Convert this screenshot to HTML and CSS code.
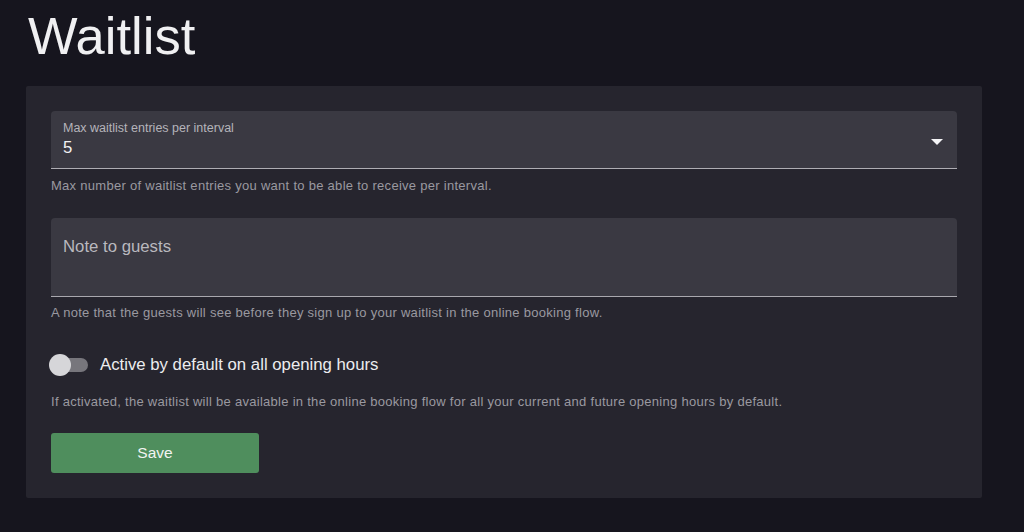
FILE: index.html
```html
<!DOCTYPE html>
<html lang="en">
<head>
<meta charset="utf-8">
<title>Waitlist</title>
<link rel="stylesheet" href="styles.css">
</head>
<body>
<div class="page">
  <h1 class="title">Waitlist</h1>
  <section class="card">
    <div class="field select">
      <div class="field-body">
        <div class="field-label">Max waitlist entries per interval</div>
        <div class="field-value">5</div>
      </div>
      <svg class="arrow" width="12" height="6" viewBox="0 0 12 6" aria-hidden="true"><polygon points="0,0 12,0 6,6" fill="#f4f4f6"/></svg>
    </div>
    <p class="helper helper-first">Max number of waitlist entries you want to be able to receive per interval.</p>

    <div class="field note">
      <div class="note-label">Note to guests</div>
    </div>
    <p class="helper helper-note">A note that the guests will see before they sign up to your waitlist in the online booking flow.</p>

    <div class="toggle-row">
      <span class="switch"><span class="track"></span><span class="thumb"></span></span>
      <span class="toggle-label">Active by default on all opening hours</span>
    </div>
    <p class="helper helper-toggle">If activated, the waitlist will be available in the online booking flow for all your current and future opening hours by default.</p>

    <button class="save" type="button">Save</button>
  </section>
</div>
</body>
</html>
```

FILE: styles.css
```css
html, body {
  margin: 0;
  padding: 0;
  background: #16151e;
  font-family: "Liberation Sans", Arial, sans-serif;
}

.page {
  padding: 6px 42px 0 26px;
  height: 532px;
  box-sizing: border-box;
}

.title {
  margin: 0 0 20px 0;
  padding-left: 2px;
  font-size: 52.5px;
  line-height: 60px;
  font-weight: 400;
  color: #f0f0f2;
}

.card {
  background: #26252e;
  border-radius: 2px;
  padding: 25px 25px 25px 25px;
}

.field {
  background: #3a3942;
  border-radius: 4px 4px 0 0;
  border-bottom: 1px solid #aeadb3;
}

.select {
  display: flex;
  padding: 9px 14px 9px 12px;
}

.field-body {
  flex: 1;
}

.field-label {
  font-size: 12.5px;
  line-height: 16px;
  color: #b5b4ba;
}

.field-value {
  font-size: 16.75px;
  line-height: 23px;
  color: #f2f2f4;
}

.arrow {
  display: block;
  margin-top: 19px;
}

.note {
  height: 79px;
  box-sizing: border-box;
  padding: 19px 12px 0 12px;
  border-bottom-color: #a9a8ae;
}

.note-label {
  font-size: 16.75px;
  line-height: 20px;
  color: #b9b8be;
}

.helper {
  margin: 0;
  font-size: 13px;
  line-height: 16px;
  letter-spacing: 0.28px;
  color: #9a99a0;
}

.helper-first {
  margin-top: 9px;
  margin-bottom: 24px;
}

.helper-note {
  margin-top: 8px;
}

.toggle-row {
  display: flex;
  align-items: center;
  height: 20px;
  margin-top: 34px;
}

.switch {
  position: relative;
  width: 40px;
  height: 22px;
  margin-left: -3px;
  margin-right: 12px;
  flex: none;
}

.track {
  position: absolute;
  left: 4px;
  top: 4px;
  width: 36px;
  height: 14px;
  border-radius: 7px;
  background: #77767c;
}

.thumb {
  position: absolute;
  left: 1px;
  top: 0;
  width: 22px;
  height: 22px;
  border-radius: 50%;
  background: #d6d6d9;
}

.toggle-label {
  font-size: 16.75px;
  line-height: 20px;
  color: #ececef;
}

.helper-toggle {
  margin-top: 19px;
}

.save {
  display: block;
  margin-top: 23px;
  width: 208px;
  height: 40px;
  border: none;
  border-radius: 3px;
  background: #4f8e5d;
  color: #f2f4f2;
  font-family: "Liberation Sans", Arial, sans-serif;
  font-size: 15.5px;
  padding: 0;
}
```
